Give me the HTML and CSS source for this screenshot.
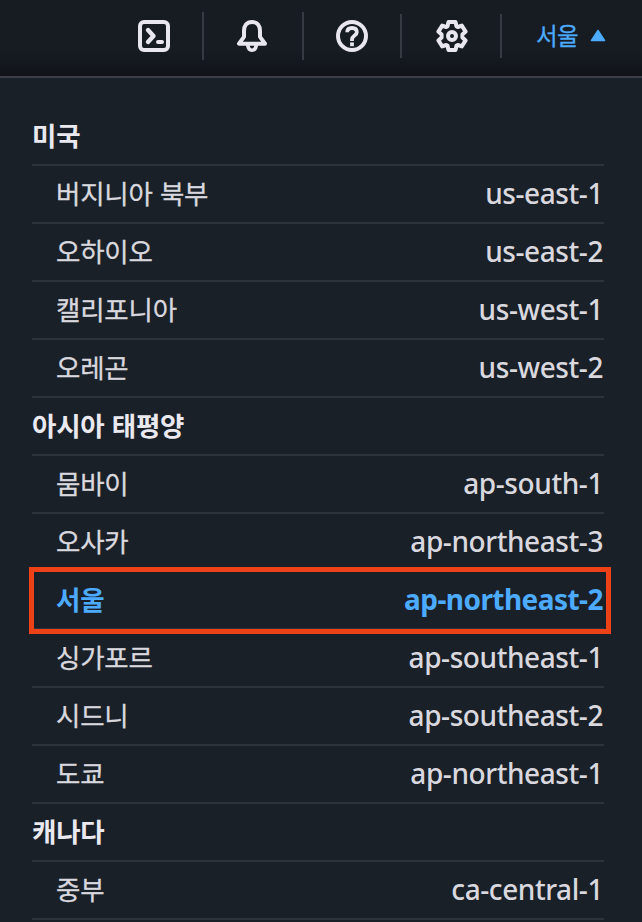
FILE: index.html
```html
<!DOCTYPE html>
<html lang="ko">
<head>
<meta charset="utf-8">
<title>리전 선택</title>
<link rel="stylesheet" href="styles.css">
</head>
<body>
<header class="topbar">
  <button class="tool shell" aria-label="CloudShell"><svg viewBox="0 0 32 32"><rect x="2" y="2" width="28" height="28" rx="4"/><path d="M10 10l5.500 6-5.500 6" stroke-width="4.400"/><path d="M20 22h4"/></svg></button>
  <button class="tool bell" aria-label="알림"><svg viewBox="0 0 32 32"><path d="M16 2C10.500 2 8 6 8 11v5.800L3 23.700h26L24 16.800V11C24 6 21.500 2 16 2z"/><path d="M11.800 25.500c.4 3 2 4.700 4.200 4.700s3.800-1.700 4.200-4.700" stroke-width="3.600"/></svg></button>
  <button class="tool help" aria-label="도움말"><svg viewBox="0 0 32 32"><circle cx="16" cy="16" r="14"/><path class="mark" d="M11.200 12.300C11.200 9.500 13 8 16 8s4.800 1.600 4.800 4.200c0 3.300-4.800 3.400-4.800 7.300V21"/><path class="mark" d="M16 22.400v3.800"/></svg></button>
  <button class="tool settings" aria-label="설정"><svg viewBox="0 0 32 32"><path d="M12.400 2h7.200l.8 4.200 1.400.8 4-1.400 3.800 6-3.200 2.900v3l3.200 2.900-3.800 6-4-1.400-1.400.8-.8 4.200h-7.200l-.8-4.200-1.400-.8-4 1.400-3.800-6 3.200-2.900v-3L2.400 11.600l3.800-6 4 1.400 1.400-.8z"/><circle cx="16" cy="16" r="4"/></svg></button>
  <button class="region-toggle"><span>서울</span><svg class="caret" viewBox="0 0 16 13"><path d="M8 1.500L14.500 11.500h-13z"/></svg></button>
</header>
<main class="regions">
  <h2>미국</h2>
  <ul>
    <li><span class="name">버지니아 북부</span><span class="code">us-east-1</span></li>
    <li><span class="name">오하이오</span><span class="code">us-east-2</span></li>
    <li><span class="name">캘리포니아</span><span class="code">us-west-1</span></li>
    <li><span class="name">오레곤</span><span class="code">us-west-2</span></li>
  </ul>
  <h2>아시아 태평양</h2>
  <ul>
    <li><span class="name">뭄바이</span><span class="code">ap-south-1</span></li>
    <li><span class="name">오사카</span><span class="code">ap-northeast-3</span></li>
    <li class="current"><span class="name">서울</span><span class="code">ap-northeast-2</span></li>
    <li><span class="name">싱가포르</span><span class="code">ap-southeast-1</span></li>
    <li><span class="name">시드니</span><span class="code">ap-southeast-2</span></li>
    <li><span class="name">도쿄</span><span class="code">ap-northeast-1</span></li>
  </ul>
  <h2>캐나다</h2>
  <ul>
    <li><span class="name">중부</span><span class="code">ca-central-1</span></li>
  </ul>
</main>
</body>
</html>
```
FILE: styles.css
```css
* { box-sizing: border-box; }
body {
  margin: 0;
  height: 922px;
  overflow: hidden;
  background: #1a2028;
  color: #d9d8df;
  font-family: "Noto Sans", "Noto Sans CJK KR", sans-serif;
}
.topbar {
  display: grid;
  grid-template-columns: 204px 100px 98px 100px 1fr;
  height: 78px;
  padding-top: 12px;
  border-bottom: 2px solid #3b3d47;
  background: linear-gradient(#171c23 0 66%, #10131a 100%);
}
button {
  padding: 0;
  border: 0;
  background: none;
  font: inherit;
}
.tool {
  display: flex;
  justify-content: center;
  height: 48px;
  padding-top: 8px;
  border-right: 2px solid #373a43;
}
.shell { justify-content: flex-end; padding-right: 32px; }
.bell { padding-right: 2px; }
.help { padding-right: 2px; border-right: 0; }
.settings {
  height: 44px;
  margin: 2px 0 0 -2px;
  padding: 6px 0 0 2px;
  border-left: 2px solid #373a43;
}
.tool svg {
  width: 32px;
  height: 32px;
  fill: none;
  stroke: #e8e6ee;
  stroke-width: 4;
  stroke-linecap: round;
  stroke-linejoin: round;
}
.tool .mark { stroke-width: 3.8; stroke-linecap: butt; }
.region-toggle {
  display: flex;
  height: 46px;
  align-items: center;
  gap: 12px;
  padding-left: 34px;
  color: #4caaff;
  font-family: "Noto Sans CJK KR", sans-serif;
  font-size: 23.500px;
  letter-spacing: -.6px;
  -webkit-text-stroke: .3px;
}
.caret {
  width: 16px;
  height: 13px;
  margin-top: 1px;
  fill: #4caaff;
  stroke: #4caaff;
  stroke-width: 1.500;
  stroke-linejoin: round;
}
.regions { padding: 30px 38px 0 32px; }
h2, li {
  height: 58px;
  margin: 0;
  border-bottom: 2px solid #2e323b;
  line-height: 55px;
}
h2 {
  color: #ebe9f0;
  font-family: "Noto Sans CJK KR", sans-serif;
  font-size: 26.500px;
  font-weight: 700;
  line-height: 53px;
  letter-spacing: -.2px;
}
ul { margin: 0; padding: 0; list-style: none; }
li {
  position: relative;
  display: flex;
  justify-content: space-between;
  padding-left: 24px;
}
.name {
  font-family: "Noto Sans CJK KR", sans-serif;
  font-size: 26.500px;
  line-height: 53px;
  letter-spacing: -.2px;
  -webkit-text-stroke: .3px;
}
.code {
  padding-right: 1px;
  font-size: 28px;
  font-weight: 500;
  letter-spacing: -.42px;
}
.current { color: #4caaff; font-weight: 700; }
.current .name { -webkit-text-stroke: 0; }
.current .code { font-weight: 700; letter-spacing: -.55px; }
.current::after {
  content: "";
  position: absolute;
  inset: -5px -7px -6px -3px;
  border: 5px solid #ee4118;
}
```
